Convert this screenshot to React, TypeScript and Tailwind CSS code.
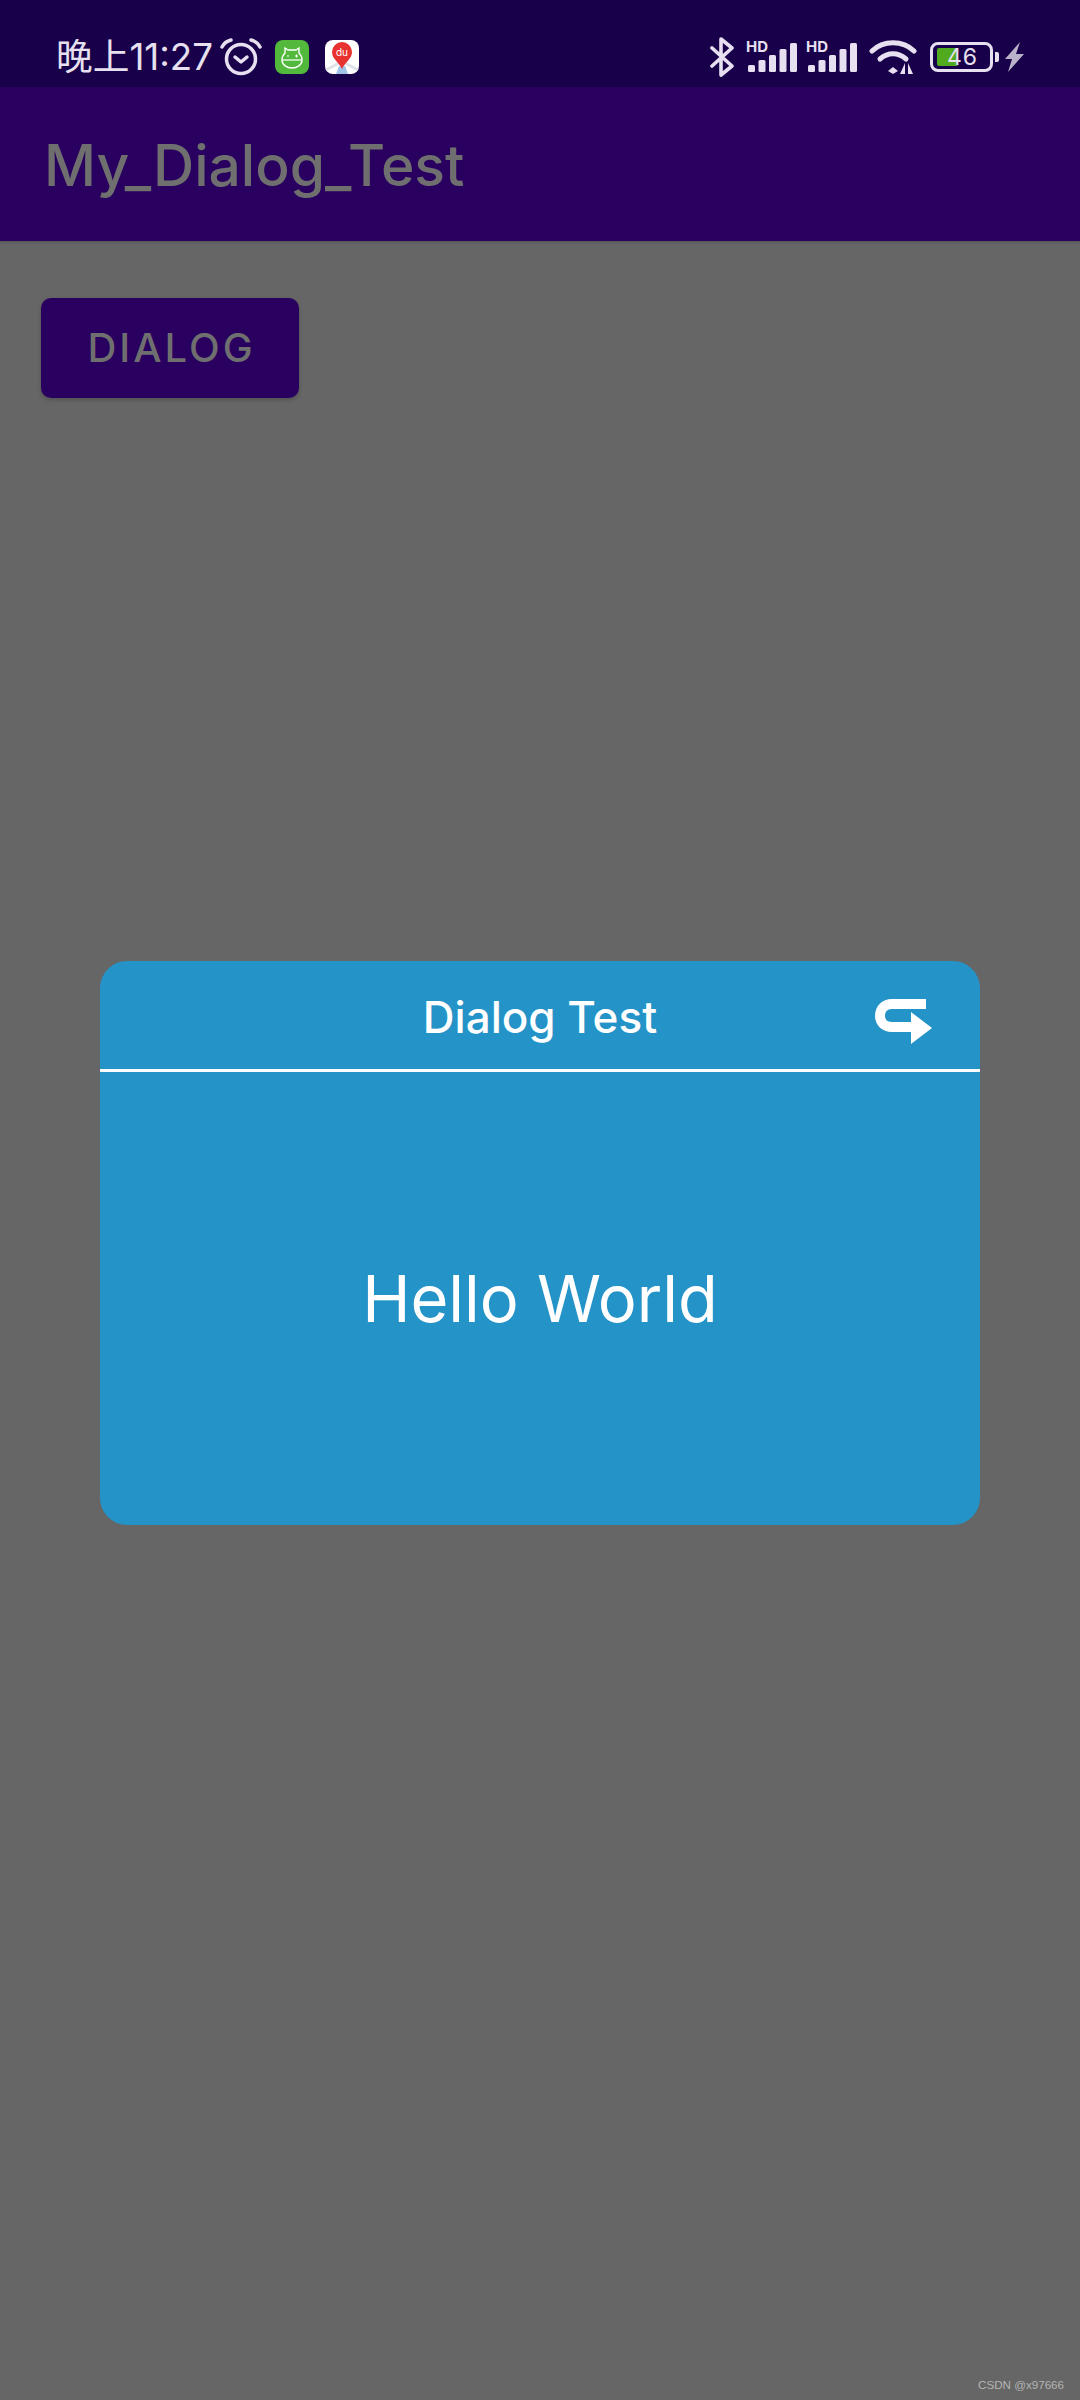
const sans = 'font-["Inter","Noto_Sans",sans-serif]';

function Alarm() {
  return (
    <svg width="42" height="38" viewBox="0 0 42 38" fill="none" stroke="#e6e0f0" strokeLinecap="round" className="ml-[7px]">
      <circle cx="21" cy="21" r="14.5" strokeWidth="3.5" />
      <path d="M15 19l6 5 6-5" strokeWidth="3.5" strokeLinejoin="round" />
      <path d="M2 9C4 5 7 3 11 2M40 9C38 5 35 3 31 2" strokeWidth="3.5" />
    </svg>
  );
}

function CatBadge() {
  return (
    <svg width="34" height="34" viewBox="0 0 34 34" className="ml-[13px]">
      <rect width="34" height="34" rx="8" fill="#52b93c" />
      <path d="M10 8l3 2h8l3-2v5c2 2 3 4 3 7 0 5-5 8-10 8S7 25 7 20c0-3 1-5 3-7z" fill="none" stroke="#fff" strokeWidth="1.4" />
      <path d="M8 20h18" stroke="#fff" strokeWidth="1.2" />
      <path d="M12 16h2M20 16h3M21.5 14.5v3" stroke="#fff" strokeWidth="1" />
    </svg>
  );
}

function MapBadge() {
  return (
    <svg width="34" height="34" viewBox="0 0 34 34" className="ml-[16px]">
      <rect width="34" height="34" rx="8" fill="#fff" />
      <path d="M1 30l13-7M33 30l-13-7" stroke="#dfe3e8" strokeWidth="3" />
      <path d="M14 26h6l3 8H11z" fill="#9fc4e8" />
      <path d="M17 29C14 22 7 19 7 12a10 10 0 0 1 20 0c0 7-7 10-10 17z" fill="#e8322f" />
      <text x="17" y="16" textAnchor="middle" fontSize="10" fontFamily="Inter, sans-serif" fill="#fff">du</text>
    </svg>
  );
}

function Bluetooth() {
  return (
    <svg width="26" height="40" viewBox="0 0 26 40" fill="none" stroke="#e6e0f0" strokeWidth="3.6" strokeLinejoin="round" strokeLinecap="round">
      <path d="M3 11l20 18-11 9V2l11 9L3 29" />
    </svg>
  );
}

function Signal({ className }: { className?: string }) {
  const bars = [
    { x: 2, h: 7 },
    { x: 12.5, h: 12 },
    { x: 23, h: 17 },
    { x: 33.5, h: 23 },
    { x: 44, h: 29 },
  ];
  return (
    <div className={`relative mb-[5px] h-[36px] w-[52px] ${className ?? ''}`}>
      <span className={`absolute left-0 top-[2px] text-[15px] font-bold leading-[18px] text-[#e6e0f0] ${sans}`}>HD</span>
      <svg width="52" height="36" viewBox="0 0 52 36" fill="#e6e0f0">
        {bars.map((b) => (
          <rect key={b.x} x={b.x} y={36 - b.h} width="7" height={b.h} rx="1.5" />
        ))}
      </svg>
    </div>
  );
}

function Wifi() {
  return (
    <svg width="48" height="36" viewBox="0 0 48 36" fill="none" stroke="#e6e0f0" strokeWidth="5" strokeLinecap="round" className="ml-[11px]">
      <path d="M3 12C14 1 34 1 45 12" />
      <path d="M11 20c8-7 18-7 26 0" />
      <path d="M19 32l5-4 5 4-5 3z" fill="#e6e0f0" stroke="none" />
      <path d="M36 24v11h-5zM39 24v11h5z" fill="#e6e0f0" stroke="none" />
    </svg>
  );
}

function Battery() {
  return (
    <div className="ml-[13px] flex items-center">
      <div className="relative h-[30px] w-[63px] rounded-[8px] border-[3px] border-[#e6e0f0]">
        <div className="absolute bottom-[3px] left-[4px] top-[3px] w-[21px] rounded-[2px] bg-[#52ab1f]" />
        <span className={`absolute left-[14px] top-[-3px] text-[23px] leading-[30px] tracking-[1px] text-[#e6e0f0] ${sans}`}>46</span>
      </div>
      <div className="ml-[2px] h-[10px] w-[4px] rounded-r-[2px] bg-[#e6e0f0]" />
      <svg width="20" height="30" viewBox="0 0 20 30" fill="#b9b2c8" className="ml-[6px]">
        <path d="M15 0L0 17h7L3 30l16-18h-8z" />
      </svg>
    </div>
  );
}

export default function App() {
  return (
    <div className={`relative h-[2400px] w-[1080px] overflow-hidden bg-[#666666] ${sans}`}>
      <div className="flex h-[87px] items-center justify-between bg-[#19004a] pl-[56px] pr-[55px] pt-[26px]">
        <div className="flex items-center">
          <span className='text-[36.7px] leading-[44px] text-[#e6e0f0] font-["Inter","Noto_Sans_CJK_SC",sans-serif]'>晚上11:27</span>
          <Alarm />
          <CatBadge />
          <MapBadge />
        </div>
        <div className="flex items-center">
          <Bluetooth />
          <Signal className="ml-[11px]" />
          <Signal className="ml-[8px]" />
          <Wifi />
          <Battery />
        </div>
      </div>

      <div className="flex h-[154px] items-center bg-[#29005f] pl-[44px] pt-[2px] shadow-[0_1px_3px_rgba(0,0,0,0.2)]">
        <h1 className="text-[57px] font-medium leading-none text-[#6f6f6f]">My_Dialog_Test</h1>
      </div>

      <div className="pl-[41px] pt-[57px]">
        <button className="flex h-[100px] w-[258px] items-center justify-center rounded-[10px] bg-[#29005f] pl-[3px] text-[40px] font-medium tracking-[3px] text-[#6f6f6f] shadow-[0_2px_4px_rgba(0,0,0,0.2)]">
          DIALOG
        </button>
      </div>

      <div className="absolute left-[100px] top-[961px] flex h-[564px] w-[880px] flex-col rounded-[27px] bg-[#2493c8] text-white">
        <div className="relative flex h-[111px] items-center justify-center border-b-[3px] border-white pt-[3px]">
          <span className="text-[44px] font-medium leading-none">Dialog Test</span>
          <svg width="57" height="45" viewBox="0 0 57 45" className="absolute right-[48px] top-[38px]" fill="#fff">
            <path d="M51 0V10H17C12 10 10 13 10 17C10 20 12 23 17 23H36V13L57 29L36 45V33H17C7 33 0 26 0 17C0 7 7 0 17 0Z" />
          </svg>
        </div>
        <div className="flex flex-1 items-center justify-center">
          <span className="text-[65px] font-normal leading-none">Hello World</span>
        </div>
      </div>

      <span className="absolute right-[16px] top-[2378px] text-[11.6px] leading-[14px] text-[#b5b5b5] font-['Liberation_Sans',sans-serif]">CSDN @x97666</span>
    </div>
  );
}
